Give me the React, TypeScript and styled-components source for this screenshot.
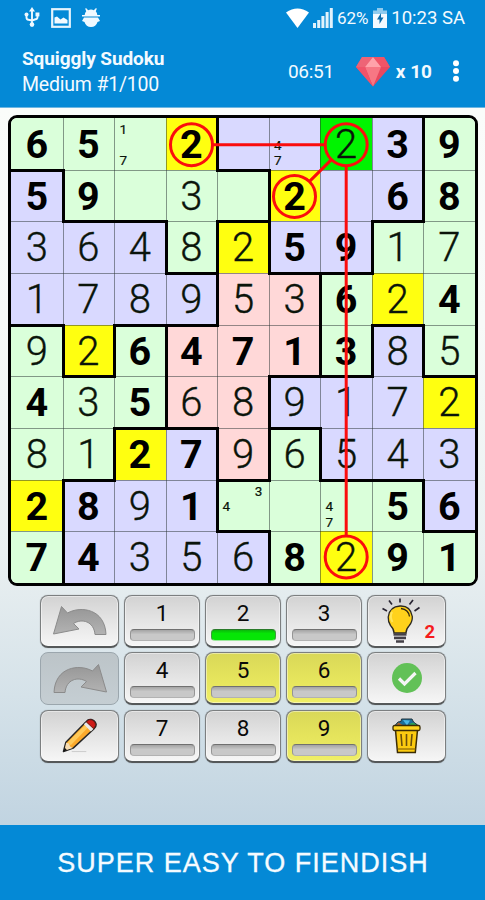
import React from "react";
import styled, { createGlobalStyle, css } from "styled-components";

const GlobalStyle = createGlobalStyle`
  * { box-sizing: border-box; }
  body { margin: 0; font-family: Roboto, "Liberation Sans", sans-serif; background: #0489d6; }
`;

const Page = styled.div`
  width: 485px;
  height: 900px;
  display: flex;
  flex-direction: column;
  overflow: hidden;
`;

const Header = styled.header`
  height: 108px;
  flex: none;
  background: #0489d6;
  border-bottom: 1px solid #6db6e2;
  color: #f3faff;
`;

const StatusBar = styled.div`
  height: 35px;
  display: flex;
  align-items: center;
  padding: 0 20px 0 24px;
`;

const StatusIcons = styled.div`
  display: flex;
  align-items: center;
  gap: 11px;
  flex: 1;
  svg { display: block; }
`;

const StatusInfo = styled.div`
  display: flex;
  align-items: center;
  svg { display: block; }
`;

const SignalGroup = styled.div`
  display: flex;
  gap: 4px;
`;

const Percent = styled.span`
  font-size: 17px;
  line-height: 20px;
  letter-spacing: -0.1px;
  margin: 0 5px 0 4px;
`;

const Clock = styled.span`
  font-size: 18.5px;
  line-height: 20px;
  margin-left: 4px;
`;

const TitleBar = styled.div`
  height: 72px;
  display: flex;
  align-items: center;
  padding: 0 25px 0 22px;
`;

const Titles = styled.div`
  flex: 1;
  display: flex;
  flex-direction: column;
  padding-top: 1px;
`;

const Title = styled.div`
  font-size: 19px;
  font-weight: 700;
  line-height: 26px;
  letter-spacing: -0.09px;
`;

const Subtitle = styled.div`
  font-size: 19.5px;
  line-height: 26px;
  letter-spacing: -0.2px;
`;

const Timer = styled.div`
  font-size: 19px;
  letter-spacing: -0.3px;
  margin-right: 22px;
`;

const GemCount = styled.div`
  font-size: 19px;
  font-weight: 700;
  margin: 0 20px 0 6px;
`;

const Main = styled.main`
  flex: 1;
  display: flex;
  flex-direction: column;
  align-items: flex-start;
  background: linear-gradient(#fafcfa 0%, #f7faf8 30%, #eaf0f1 62%, #d5e2e9 82%, #c1d4e1 100%);
  padding-top: 7px;
`;

const Board = styled.div`
  position: relative;
  margin-left: 8px;
  width: 470px;
  height: 471px;
  border: 3px solid #000;
  border-radius: 9px;
  overflow: hidden;
  display: grid;
  grid-template-columns: repeat(9, 1fr);
  grid-template-rows: repeat(9, 1fr);
`;

const Cell = styled.div<{ $fill: string; $top: boolean; $left: boolean; $row: number; $col: number }>`
  position: relative;
  display: flex;
  min-width: 0;
  min-height: 0;
  background: ${(p) => p.$fill};
  &::before, &::after {
    content: "";
    position: absolute;
    background: rgba(40, 50, 50, 0.5);
  }
  &::before {
    top: 0;
    left: 0;
    right: 0;
    height: 1px;
    ${(p) => p.$row === 0 && "display: none;"}
    ${(p) => p.$top && css`top: -1px; height: 3px; left: -1px; right: -2px; background: #000; z-index: 1;`}
  }
  &::after {
    top: 0;
    left: 0;
    bottom: 0;
    width: 1px;
    ${(p) => p.$col === 0 && "display: none;"}
    ${(p) => p.$left && css`left: -1px; width: 3px; top: -1px; bottom: -2px; background: #000; z-index: 1;`}
  }
`;

const Digit = styled.span<{ $given: boolean }>`
  margin: auto;
  font-size: ${(p) => (p.$given ? "39.5px" : "40px")};
  line-height: 50px;
  padding-top: 2px;
  color: ${(p) => (p.$given ? "#000" : "#0a140a")};
  font-weight: ${(p) => (p.$given ? 700 : 300)};
  -webkit-text-stroke: ${(p) => (p.$given ? "0" : "0.35px #0a140a")};
`;

const Notes = styled.div`
  flex: 1;
  display: grid;
  grid-template-columns: repeat(3, 1fr);
  grid-template-rows: repeat(3, 1fr);
  padding: 4px 2px 1px 1px;
`;

const Note = styled.span`
  display: flex;
  align-items: center;
  justify-content: center;
  font-size: 13.5px;
  line-height: 13px;
  font-weight: 400;
  -webkit-text-stroke: 0.2px #0a140a;
  color: #0a140a;
`;

const Links = styled.svg`
  position: absolute;
  inset: 0;
  z-index: 2;
`;

const Keypad = styled.div`
  margin: 8.5px 0 0 40px;
  display: grid;
  grid-template-columns: 79px 76px 76px 76px 79px;
  grid-template-rows: repeat(3, 53px);
  gap: 4.6px 5px;
`;

const tones = {
  grey: "linear-gradient(#d2d2d2, #e3e3e3 45%, #f6f6f6)",
  yellow: "linear-gradient(#d9d858, #e5e45c 50%, #f0ef66)",
  off: "linear-gradient(#bcc4c8, #c5ced3)",
};

const Key = styled.button<{ $tone: keyof typeof tones }>`
  position: relative;
  padding: 0;
  display: flex;
  flex-direction: column;
  align-items: center;
  justify-content: center;
  border: 1.5px solid #7c7f80;
  border-bottom: 2px solid #555859;
  border-radius: 8px;
  background: ${(p) => tones[p.$tone]};
  box-shadow: inset 0 0 0 1px rgba(255, 255, 255, 0.45), 0 0 1px rgba(0, 0, 0, 0.4);
  font-family: inherit;
  svg { display: block; }
  ${(p) => p.$tone === "off" && css`
    border: 1.5px solid #9ba6ad;
    box-shadow: none;
  `}
`;

const KeyNumber = styled.span`
  font-size: 22.5px;
  line-height: 26px;
  margin-top: -1px;
  color: #0a0a0a;
`;

const Meter = styled.span<{ $full: boolean }>`
  width: 65px;
  height: 12px;
  margin-top: 3px;
  border-radius: 4px;
  border: 1px solid ${(p) => (p.$full ? "#3f9a3f" : "#959595")};
  border-top-color: ${(p) => (p.$full ? "#2a7a2a" : "#707070")};
  background: ${(p) => (p.$full ? "linear-gradient(#0bb80b, #06e606 35%)" : "linear-gradient(#a4a4a4, #c8c8c8 45%)")};
  border-bottom-color: ${(p) => (p.$full ? "#9be89b" : "#b2b2b2")};
`;

const HintLayout = styled.span`
  padding-right: 11px;
`;

const HintCount = styled.span`
  position: absolute;
  right: 10px;
  bottom: 2px;
  font-size: 18.5px;
  line-height: 24px;
  font-weight: 700;
  color: #f51c1c;
`;

const Banner = styled.footer`
  height: 75px;
  flex: none;
  display: flex;
  align-items: center;
  justify-content: center;
  background: #0489d6;
  color: #f5fbff;
  font-family: "Liberation Sans", sans-serif;
  font-size: 27px;
  letter-spacing: 1px;
  white-space: nowrap;
  padding: 1px 0 0 1px;
  -webkit-text-stroke: 0.3px #f5fbff;
`;

const regions = [
  "AAAABBBBC",
  "DAAAABBBC",
  "DDDAEBBCC",
  "DDDDEECCC",
  "FDFEEECIC",
  "FFFEEIIII",
  "FFGGEHIII",
  "FGGGHHHHI",
  "FGGGGHHHH",
];

const regionFill: Record<string, string> = {
  A: "#daffda", B: "#d9d9ff", C: "#daffda", D: "#d9d9ff", E: "#ffd8d8",
  F: "#daffda", G: "#d9d9ff", H: "#daffda", I: "#d9d9ff",
};

const digits = [
  "65.2..239",
  "59.3.2.68",
  "364825917",
  "178953624",
  "926471385",
  "435689172",
  "812796543",
  "2891...56",
  "743568291",
];

// "#" marks a given digit, "." a digit entered by the player.
const givens = [
  "##.#...##",
  "##...#.##",
  ".....##..",
  "......#.#",
  "..#####..",
  "#.#......",
  "..##.....",
  "##.#...##",
  "##...#.##",
];

const notes: Record<string, number[]> = {
  "0-2": [1, 7],
  "0-5": [4, 7],
  "7-4": [3, 4],
  "7-6": [4, 7],
};

const fillFor = (r: number, c: number) => {
  if (r === 0 && c === 6) return "#00f400";
  if (digits[r][c] === "2") return "#ffff10";
  return regionFill[regions[r][c]];
};

const Usb = () => (
  <svg width="16" height="21" viewBox="0 0 16 21" fill="none" stroke="#eef8ff" strokeWidth="1.9">
    <path d="M8 4v13M2.500 8v2.500q0 2 2 2.300L8 13.500M13.500 8v2q0 2-2 2.300L8 13.500" />
    <path d="M8 0l3 4.500H5z" fill="#eef8ff" stroke="none" />
    <circle cx="8" cy="17.600" r="2.300" fill="#eef8ff" stroke="none" />
    <circle cx="2.500" cy="7.500" r="2" fill="#eef8ff" stroke="none" />
    <path d="M11.500 5.500h3.900v3.900h-3.900z" fill="#eef8ff" stroke="none" />
  </svg>
);

const Picture = () => (
  <svg width="20" height="20" viewBox="0 0 20 20">
    <rect x="1.200" y="1.200" width="17.600" height="17.600" fill="none" stroke="#e6f4fd" strokeWidth="2.200" />
    <path d="M3.500 15.500V9.500l2.500-1 3.500 3 3-2 4 2.500v3.500z" fill="#f3faff" />
  </svg>
);

const Debug = () => (
  <svg width="18" height="20" viewBox="0 0 18 20" fill="#f0f9ff">
    <path d="M4 0l2.200 2.200Q9 1 11.800 2.200L14 0l.8.8-1 2.400Q15.500 5 15.500 8h-13q0-3 1.700-4.800L3.200.8z" />
    <path d="M0 7h18v1.600H0zM2 9.400h14L18 13l-2.500 1Q14 19 9 19T2.500 14L0 13z" />
  </svg>
);

const Wifi = () => (
  <svg width="23" height="20" viewBox="0 0 24 20" preserveAspectRatio="none">
    <path d="M0 4.500Q12-3.500 24 4.500L12 20z" fill="#fff" />
  </svg>
);

const Signal = () => (
  <svg width="20" height="20" viewBox="0 0 20 20" fill="#e1f2fc">
    <path d="M0 15h3v5H0zM4.200 12h3v8h-3zM8.400 8h3v12h-3zM12.600 4h3v16h-3zM16.800 0h3v20h-3z" />
  </svg>
);

const Battery = () => (
  <svg width="14" height="20" viewBox="0 0 14 20">
    <path d="M4 0h6v2.500h4V7H0V2.500h4z" fill="#8fcbee" />
    <path d="M0 6h14v14H0z" fill="#f3faff" />
    <path d="M8 5l-4 6.500h2.500v4.500L10.500 9.500H8z" fill="#0a6cab" />
  </svg>
);

const Gem = () => (
  <svg width="34" height="31" viewBox="0 0 34 31">
    <path d="M6 1h22l6 10-17 19.500L0 11z" fill="#e8485f" />
    <path d="M6 1h11L9 11H0z" fill="#ee6476" />
    <path d="M17 1h11l6 10h-9z" fill="#f05467" />
    <path d="M17 1l8 10H9z" fill="#ffa2aa" />
    <path d="M9 11h16l-8 19.500z" fill="#f77784" />
    <path d="M0 11h9l8 19.500z" fill="#f0536a" />
  </svg>
);

const Dots = () => (
  <svg width="8" height="22" viewBox="0 0 8 22" fill="#fff">
    <circle cx="4" cy="3.200" r="3" />
    <circle cx="4" cy="11" r="3" />
    <circle cx="4" cy="18.800" r="3" />
  </svg>
);

const CurvedArrow = ({ flip = false }: { flip?: boolean }) => (
  <svg width="56" height="32" viewBox="0 0 56 32">
    <defs>
      <linearGradient id="arrow" x1="0" y1="0" x2="0" y2="1">
        <stop offset="0" stopColor="#969696" />
        <stop offset="1" stopColor="#b3b3b3" />
      </linearGradient>
    </defs>
    <path
      transform={flip ? "translate(56 0) scale(-1 1)" : undefined}
      d="M1.500 29L9.500 1.500l6 6.500C29 .5 53 4 54 29.500H43C42 16.500 30 13 21.500 18.500L27 24z"
      fill="url(#arrow)"
      stroke="#8b8b8b"
      strokeWidth="1"
    />
  </svg>
);

const PencilDrawing = () => (
  <svg width="35" height="35" viewBox="0 0 36 36">
    <path d="M10 34.500h15" stroke="#ccc" strokeWidth="1" />
    <path d="M1.500 34.500L4 25 25 3.500q2-2.500 5-2 4 1 5 4.500.5 3-2 5L11.500 31z" fill="#fba92b" stroke="#252525" strokeWidth="1.500" strokeLinejoin="round" />
    <path d="M6 25L25.500 5.500l3 2.500L9 28z" fill="#ffca59" />
    <path d="M4.300 25.500l3 .8 1 3 2.700 1.500-8.500 3z" fill="#f7ddb3" />
    <path d="M1.500 34.500l1.300-4 2.500 2.700z" fill="#111" />
    <path d="M22.500 6.500L25 4l7.500 7-2.800 2.800z" fill="#e9e9e9" />
    <path d="M25 4q3-3.500 6-2 4 2 3.500 5.500L32.500 11z" fill="#cf1b18" stroke="#581313" strokeWidth=".8" />
  </svg>
);

const Bulb = () => (
  <svg width="40" height="46" viewBox="0 0 40 46">
    <path d="M1.500 10.500l4.500 2.500M8 2.500l3 4M19 .5v4M32 2l-3.500 4.500M38.500 9.500L33.500 13" stroke="#282432" strokeWidth="1.700" />
    <path d="M13 35q0-4-3.500-7.500Q7 24 7.200 19 8.500 8.500 19 8t12.300 10.500q.3 5-3 9Q25 31 25 35z" fill="#ffd21c" stroke="#2b2820" strokeWidth="1.300" />
    <path d="M20 10.500q7.500 1 8.500 8" fill="none" stroke="#322810" strokeWidth="1.300" />
    <path d="M11 14q-2.500 5 .5 10" fill="none" stroke="#ffe55a" strokeWidth="2" />
    <path d="M12.500 36.500h13M13 40h12M15 43.500h8" stroke="#444047" strokeWidth="2.600" />
    <path d="M13 38.300h12" stroke="#a2a0a6" strokeWidth="1" />
  </svg>
);

const Check = () => (
  <svg width="30" height="30" viewBox="0 0 30 30">
    <circle cx="15" cy="15" r="15" fill="#62c157" />
    <path d="M7 15.500l5.500 5.500L23.500 10" fill="none" stroke="#f5f5f5" strokeWidth="3.200" />
  </svg>
);

const Trash = () => (
  <svg width="29" height="36" viewBox="0 0 29 36">
    <path d="M2.500 8l3.500-4 3-.5.500-2.500h10.500l1.500 3 4 3z" fill="#1d6d98" stroke="#20323a" strokeWidth="1" />
    <path d="M11 2l7 .5-3 5z" fill="#4bb7e4" />
    <path d="M3 8.500l3.500-4 6.500 4z" fill="#b0602a" />
    <path d="M16 8q5-6.500 10 .5z" fill="#2da357" />
    <path d="M3.500 12h22l-2.200 22.500H5.500z" fill="#fccb10" stroke="#3b2c05" strokeWidth="1.500" />
    <rect x="1" y="7.500" width="27" height="5" rx="1.500" fill="#ffd51f" stroke="#3b2c05" strokeWidth="1.300" />
    <path d="M9 16l1 12M14.500 16v12M20 16l-1 12" stroke="#6b500d" strokeWidth="1.600" />
    <path d="M5.500 31h18" stroke="#8b6807" strokeWidth="1.200" />
  </svg>
);

const NumberKey = ({ n, tone = "grey", full = false }: { n: number; tone?: keyof typeof tones; full?: boolean }) => (
  <Key $tone={tone}>
    <KeyNumber>{n}</KeyNumber>
    <Meter $full={full} />
  </Key>
);

const CellContent = ({ r, c }: { r: number; c: number }) => {
  const marks = notes[`${r}-${c}`];
  if (marks) {
    return (
      <Notes>
        {[1, 2, 3, 4, 5, 6, 7, 8, 9].map((n) => (
          <Note key={n}>{marks.includes(n) ? n : ""}</Note>
        ))}
      </Notes>
    );
  }
  const d = digits[r][c];
  return d === "." ? null : <Digit $given={givens[r][c] === "#"}>{d}</Digit>;
};

export default function App() {
  return (
    <Page>
      <GlobalStyle />
      <Header>
        <StatusBar>
          <StatusIcons>
            <Usb />
            <Picture />
            <Debug />
          </StatusIcons>
          <StatusInfo>
            <SignalGroup>
              <Wifi />
              <Signal />
            </SignalGroup>
            <Percent>62%</Percent>
            <Battery />
            <Clock>10:23 SA</Clock>
          </StatusInfo>
        </StatusBar>
        <TitleBar>
          <Titles>
            <Title>Squiggly Sudoku</Title>
            <Subtitle>Medium #1/100</Subtitle>
          </Titles>
          <Timer>06:51</Timer>
          <Gem />
          <GemCount>x 10</GemCount>
          <Dots />
        </TitleBar>
      </Header>
      <Main>
        <Board>
          {regions.map((row, r) =>
            row.split("").map((id, c) => (
              <Cell
                key={`${r}-${c}`}
                $row={r}
                $col={c}
                $fill={fillFor(r, c)}
                $top={r > 0 && regions[r - 1][c] !== id}
                $left={c > 0 && row[c - 1] !== id}
              >
                <CellContent r={r} c={c} />
              </Cell>
            ))
          )}
          <Links width="464" height="465" viewBox="0 0 464 465" fill="none" stroke="#fb0d0d" strokeWidth="3">
            <circle cx="180.500" cy="26.700" r="21" />
            <circle cx="335.200" cy="26.700" r="21" />
            <circle cx="283.500" cy="78.400" r="21" />
            <circle cx="335.200" cy="438.900" r="21" />
            <path d="M201.500 26.700H314.200M335.200 47.700V417.900M320.400 41.600L298.300 63.600" />
          </Links>
        </Board>
        <Keypad>
          <Key $tone="grey"><CurvedArrow /></Key>
          <NumberKey n={1} />
          <NumberKey n={2} full />
          <NumberKey n={3} />
          <Key $tone="grey">
            <HintLayout><Bulb /></HintLayout>
            <HintCount>2</HintCount>
          </Key>
          <Key $tone="off"><CurvedArrow flip /></Key>
          <NumberKey n={4} />
          <NumberKey n={5} tone="yellow" />
          <NumberKey n={6} tone="yellow" />
          <Key $tone="grey"><Check /></Key>
          <Key $tone="grey"><PencilDrawing /></Key>
          <NumberKey n={7} />
          <NumberKey n={8} />
          <NumberKey n={9} tone="yellow" />
          <Key $tone="grey"><Trash /></Key>
        </Keypad>
      </Main>
      <Banner>SUPER EASY TO FIENDISH</Banner>
    </Page>
  );
}
